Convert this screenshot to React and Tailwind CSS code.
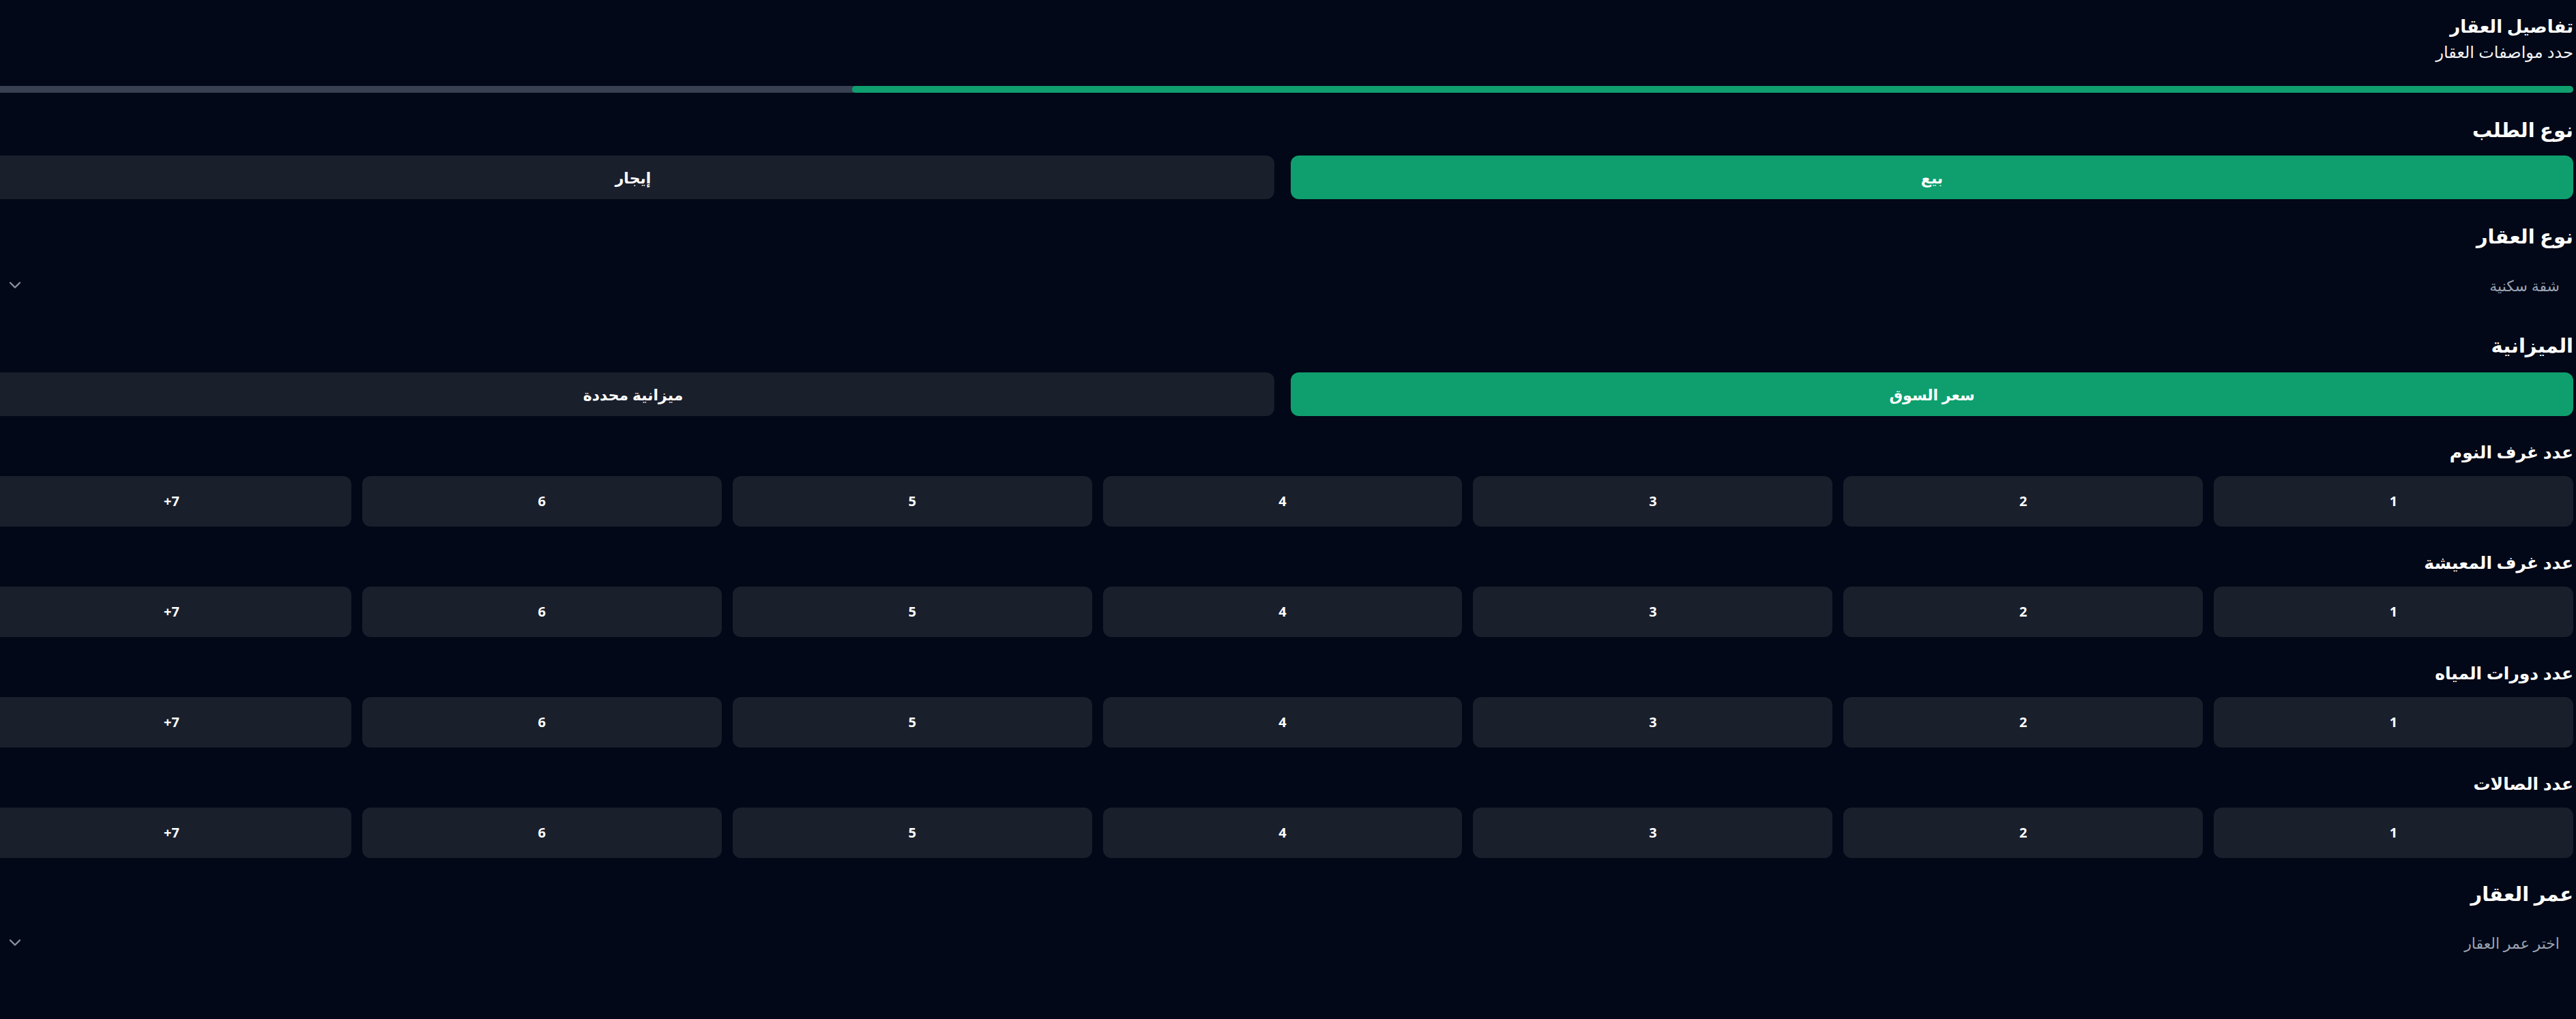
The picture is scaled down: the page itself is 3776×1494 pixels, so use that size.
import React, { useState } from 'react';
import { ChevronDown } from 'lucide-react';

const counts = ['1', '2', '3', '4', '5', '6', '+7'];

const countGroups = [
    { key: 'bedrooms', label: 'عدد غرف النوم' },
    { key: 'livingRooms', label: 'عدد غرف المعيشة' },
    { key: 'bathrooms', label: 'عدد دورات المياه' },
    { key: 'halls', label: 'عدد الصالات' },
];

const Toggle = ({ options, value, onChange }) => (
    <div className="grid grid-cols-2 gap-6">
        {options.map((opt) => (
            <button
                key={opt}
                type="button"
                onClick={() => onChange(opt)}
                className={
                    opt === value
                        ? 'h-16 rounded-xl bg-[#0f9f6e] text-[22px] font-semibold text-white'
                        : 'h-16 rounded-xl bg-[#1a1f2c] text-[22px] font-semibold text-white'
                }
            >
                {opt}
            </button>
        ))}
    </div>
);

const SelectBox = ({ placeholder }) => (
    <div className="flex h-16 items-center justify-between px-5 pt-1">
        <span className="text-[22px] text-[#9aa3b2]">{placeholder}</span>
        <ChevronDown size={28} strokeWidth={2} className="text-[#8b93a3]" />
    </div>
);

const App = () => {
    const [requestType, setRequestType] = useState('بيع');
    const [budget, setBudget] = useState('سعر السوق');

    return (
        <div
            dir="rtl"
            className="min-h-screen overflow-hidden bg-[#020817] pr-1 text-white"
            style={{ fontFamily: '"Noto Sans", "DejaVu Sans", sans-serif' }}
        >
            <div className="w-[3784px] pt-[18px] pb-10">
                {/* header */}
                <h1 className="text-[26px] leading-[40px] font-semibold">تفاصيل العقار</h1>
                <p className="text-[24px] leading-[36px] text-gray-100">حدد مواصفات العقار</p>

                {/* progress */}
                <div className="mt-8 flex h-2.5 rounded-full bg-[#374151]">
                    <div className="w-2/3 rounded-full bg-[#0f9f6e]" />
                </div>

                <section className="mt-8">
                    <h2 className="mb-4 text-[29px] leading-[44px] font-semibold">نوع الطلب</h2>
                    <Toggle options={['بيع', 'إيجار']} value={requestType} onChange={setRequestType} />
                </section>

                <section className="mt-8">
                    <h2 className="mb-4 text-[29px] leading-[44px] font-semibold">نوع العقار</h2>
                    <SelectBox placeholder="شقة سكنية" />
                </section>

                <section className="mt-9">
                    <h2 className="mb-[18px] text-[29px] leading-[44px] font-semibold">الميزانية</h2>
                    <Toggle options={['سعر السوق', 'ميزانية محددة']} value={budget} onChange={setBudget} />
                </section>

                {countGroups.map((group) => (
                    <section key={group.key} className="mt-[34px]">
                        <h3 className="mb-[18px] text-[25px] leading-[36px] font-semibold">{group.label}</h3>
                        <div className="grid grid-cols-7 gap-4">
                            {counts.map((n) => (
                                <button
                                    key={n}
                                    type="button"
                                    className="h-[74px] rounded-xl bg-[#1a1f2c] text-[20px] font-bold text-white"
                                >
                                    <span dir="ltr">{n}</span>
                                </button>
                            ))}
                        </div>
                    </section>
                ))}

                <section className="mt-[30px]">
                    <h2 className="mb-4 text-[29px] leading-[44px] font-semibold">عمر العقار</h2>
                    <SelectBox placeholder="اختر عمر العقار" />
                </section>
            </div>
        </div>
    );
};

export default App;
